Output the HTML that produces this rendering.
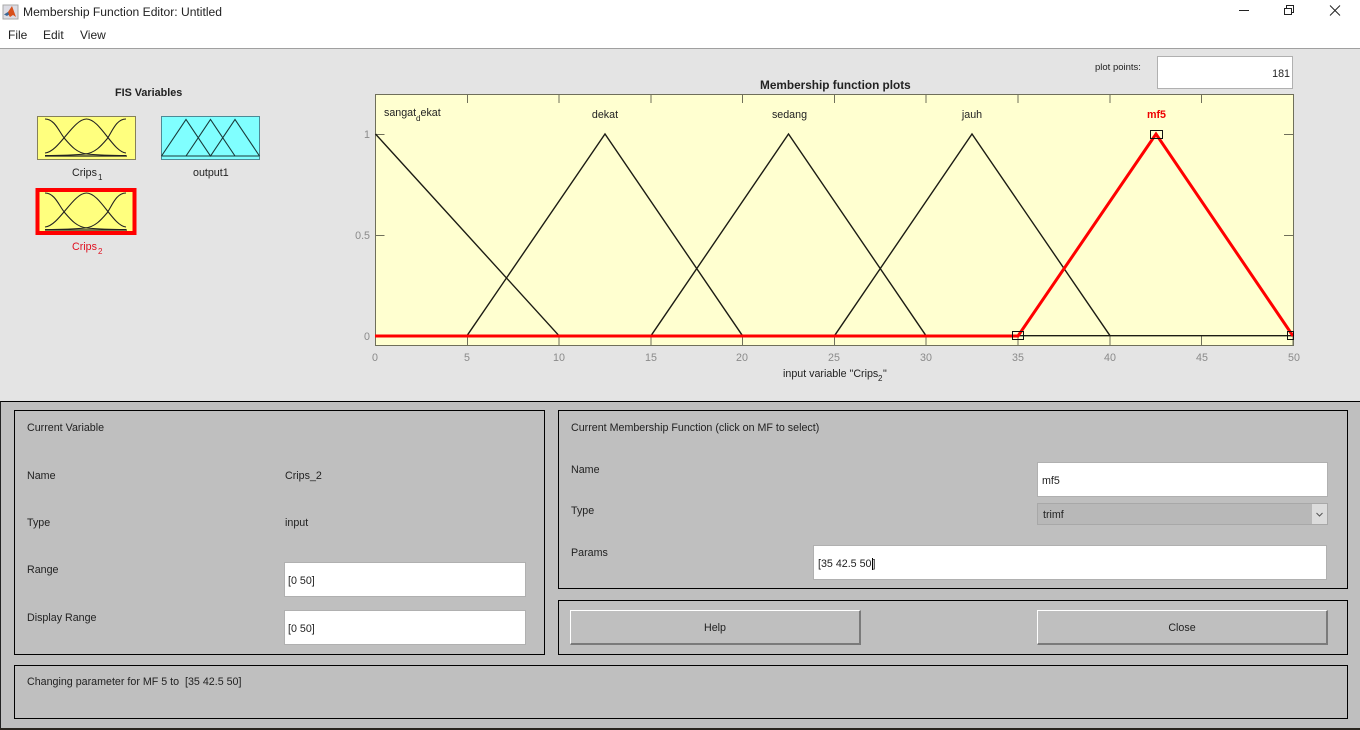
<!DOCTYPE html>
<html><head><meta charset="utf-8"><style>
html,body{margin:0;padding:0;width:1360px;height:730px;overflow:hidden;background:#e4e4e4;font-family:"Liberation Sans",sans-serif;color:#222}
div{position:absolute;box-sizing:border-box}
.t{font-size:10.7px;line-height:12px;white-space:nowrap;color:#222}
.box{border:1.4px solid #000}
.in{background:#fff;border:1px solid #b0b0b0;font-size:10.7px;line-height:12px;color:#222}
.btn{background:#bfbfbf;border-style:solid;border-width:1px 2px 2px 1px;border-color:#fff #7a7a7a #7a7a7a #fff;font-size:10.7px;text-align:center;color:#222}
svg{position:absolute;left:0;top:0}
svg text{font-family:"Liberation Sans",sans-serif}
</style></head><body>
<div style="left:0;top:0;width:1360px;height:49px;background:#fff;border-bottom:1px solid #a0a0a0"></div>
<div style="left:0;top:49px;width:1360px;height:352px;background:#e4e4e4"></div>
<svg width="20" height="20" style="left:2px;top:3px" viewBox="0 0 20 20"><rect x="1" y="2" width="15" height="14" fill="#dcdce4" stroke="#aaa"/><path d="M2 11.500L6 9L10 3L14 14L11 12L8 14L6 11Z" fill="#d8501c"/><path d="M2 11.500L6 9L7 11.500L5 13Z" fill="#3a6a9a"/></svg>
<div style="left:23px;top:4px;font-size:12.100px;line-height:16px;color:#222;white-space:nowrap">Membership Function Editor: Untitled</div>
<div style="left:8px;top:28px;font-size:12px;line-height:15px;color:#222">File</div>
<div style="left:43px;top:28px;font-size:12px;line-height:15px;color:#222">Edit</div>
<div style="left:80px;top:28px;font-size:12px;line-height:15px;color:#222">View</div>
<svg width="1360" height="60" viewBox="0 0 1360 60" style="z-index:3"><path d="M1239 10.500H1249" stroke="#222" fill="none"/><rect x="1284.500" y="8.500" width="7" height="6" fill="none" stroke="#222"/><path d="M1286.500 8V5.500H1293.500V12.500H1291.500" fill="none" stroke="#222"/><path d="M1330 5.500L1340 15.500M1340 5.500L1330 15.500" stroke="#222" fill="none"/></svg>

<div class="t" style="left:1095px;top:62px;font-size:9.500px">plot points:</div>
<div class="in" style="left:1157px;top:56px;width:136px;height:33px;text-align:right;padding:11px 2px 0 0;">181</div>

<div class="t" style="left:115px;top:87px;font-weight:bold;font-size:10.800px">FIS Variables</div>
<svg width="1360" height="400" viewBox="0 0 1360 400">
<defs>
<g id="g" fill="none" stroke="#222" stroke-width="1.100"><path d="M8 3C18 3 22 16 28 23C34 30 40 37 50 38C60 39 75 39.500 89 39.500"/><path d="M8 37C22 36 36 3 49.500 3C63 3 76 36 89 37"/><path d="M89 3C79 3 75 16 70 23C64 30 58 37 48 38C38 39 23 39.500 8 39.500"/><path d="M8 40H90" stroke-width="1.300"/></g>
</defs>
<rect x="37.500" y="116.500" width="98" height="43" fill="#ffff7e" stroke="#85805a"/>
<g transform="translate(37 116)"><use href="#g"/></g>
<rect x="161.500" y="116.500" width="98" height="43" fill="#80ffff" stroke="#4c8a96"/>
<path d="M161.500 156L186 119.500L210.500 156L235 119.500L259.500 156M186 156L210.500 119.500L235 156" fill="none" stroke="#1a3a3a" stroke-width="1.100"/><path d="M161.500 156H259.500" stroke="#1a3a3a" fill="none"/>
<rect x="37.500" y="190" width="97" height="43" fill="#ffff7e" stroke="#f00" stroke-width="4"/>
<g transform="translate(37 190)"><use href="#g"/></g>

<rect x="375.500" y="94.500" width="918" height="251" fill="#ffffd0" stroke="#6f6f5a"/>
<g stroke="#6f6f5a" fill="none">
<path d="M375.500 134.500h9M375.500 235.500h9M375.500 335.500h9M1293 134.500h-9M1293 235.500h-9M1293 335.500h-9"/>
<path d="M375.500 345v-9M467.500 345v-9M559 345v-9M651 345v-9M742.500 345v-9M834.500 345v-9M926 345v-9M1018 345v-9M1110 345v-9M1201.500 345v-9M1293 345v-9"/>
<path d="M467.500 95v8M559 95v8M651 95v8M742.500 95v8M834.500 95v8M926 95v8M1018 95v8M1110 95v8M1201.500 95v8"/>
</g>
<g font-size="10.700" fill="#8a8a8a" text-anchor="middle">
<text x="375" y="361">0</text><text x="467" y="361">5</text><text x="559" y="361">10</text><text x="651" y="361">15</text><text x="742" y="361">20</text><text x="834" y="361">25</text><text x="926" y="361">30</text><text x="1018" y="361">35</text><text x="1110" y="361">40</text><text x="1202" y="361">45</text><text x="1294" y="361">50</text>
<text x="370" y="138" text-anchor="end">1</text><text x="370" y="239" text-anchor="end">0.5</text><text x="370" y="340" text-anchor="end">0</text>
</g>
<g fill="none" stroke="#1c1c14" stroke-width="1.400">
<path d="M375.500 134L559 335.700M467 335.700L605 134L742.500 335.700M651 335.700L788.500 134L926 335.700M834.500 335.700L972 134L1110 335.700M375 335.700H1293"/>
</g>
<path d="M375 336H1018L1156 134L1293 336" fill="none" stroke="#f00" stroke-width="3"/>
<g fill="none" stroke="#111"><rect x="1012.500" y="331.500" width="11" height="8"/><rect x="1150.500" y="130.500" width="12" height="8"/><rect x="1287.500" y="331.500" width="6" height="8"/></g>
<g font-size="10.700" fill="#222" text-anchor="middle"><text x="605" y="118">dekat</text><text x="789.500" y="118">sedang</text><text x="972" y="118">jauh</text><text x="1156.500" y="118" fill="#e00" font-weight="bold">mf5</text></g>
<text x="384" y="116" font-size="10.700" fill="#222">sangat</text><text x="416" y="121" font-size="8" fill="#222">d</text><text x="420.500" y="116" font-size="10.700" fill="#222">ekat</text>
<text x="760" y="89" font-size="11.800" font-weight="bold" fill="#222">Membership function plots</text>
<text x="783" y="377" font-size="10.700" fill="#222">input variable "Crips</text><text x="878" y="381" font-size="8" fill="#222">2</text><text x="883" y="377" font-size="10.700" fill="#222">"</text>
<text x="72" y="176" font-size="10.700" fill="#222">Crips</text><text x="98" y="180" font-size="8" fill="#222">1</text>
<text x="193" y="176" font-size="10.700" fill="#222">output1</text>
<text x="72" y="250" font-size="10.700" fill="#e01020">Crips</text><text x="98" y="254" font-size="8" fill="#e01020">2</text>
</svg>

<div style="left:0;top:401px;width:1360px;height:327px;background:#bfbfbf;border-top:1.400px solid #000;border-left:1px solid #222"></div>
<div style="left:0;top:728px;width:1360px;height:2px;background:#2a2620"></div>
<div class="box" style="left:14px;top:410px;width:531px;height:245px"></div>
<div class="box" style="left:558px;top:410px;width:790px;height:179px"></div>
<div class="box" style="left:558px;top:600px;width:790px;height:55px"></div>
<div class="box" style="left:14px;top:665px;width:1334px;height:54px"></div>

<div class="t" style="left:27px;top:422px">Current Variable</div>
<div class="t" style="left:27px;top:470px">Name</div>
<div class="t" style="left:285px;top:470px">Crips_2</div>
<div class="t" style="left:27px;top:517px">Type</div>
<div class="t" style="left:285px;top:517px">input</div>
<div class="t" style="left:27px;top:564px">Range</div>
<div class="in" style="left:284px;top:562px;width:242px;height:35px;padding:12px 0 0 3px">[0 50]</div>
<div class="t" style="left:27px;top:612px">Display Range</div>
<div class="in" style="left:284px;top:610px;width:242px;height:35px;padding:12px 0 0 3px">[0 50]</div>

<div class="t" style="left:571px;top:422px">Current Membership Function (click on MF to select)</div>
<div class="t" style="left:571px;top:464px">Name</div>
<div class="in" style="left:1037px;top:462px;width:291px;height:35px;padding:12px 0 0 4px">mf5</div>
<div class="t" style="left:571px;top:505px">Type</div>
<div style="left:1037px;top:503px;width:291px;height:22px;background:#b8b8b8;border:1px solid #a8a8a8;font-size:10.700px;line-height:22px;padding-left:5px;color:#222">trimf</div>
<div style="left:1312px;top:504px;width:15px;height:20px;background:#dcdcdc"></div>
<svg width="1360" height="730" viewBox="0 0 1360 730" style="pointer-events:none"><path d="M1316.500 513L1319.500 516L1322.500 513" fill="none" stroke="#555"/></svg>
<div class="t" style="left:571px;top:547px">Params</div>
<div class="in" style="left:813px;top:545px;width:514px;height:35px;padding:12px 0 0 4px">[35 42.5 50<span style="display:inline-block;width:1px;height:12px;background:#000;vertical-align:top"></span>]</div>
<div class="btn" style="left:570px;top:610px;width:291px;height:35px;line-height:35px">Help</div>
<div class="btn" style="left:1037px;top:610px;width:291px;height:35px;line-height:35px">Close</div>
<div class="t" style="left:27px;top:676px">Changing parameter for MF 5 to&nbsp; [35 42.5 50]</div>
</body></html>
